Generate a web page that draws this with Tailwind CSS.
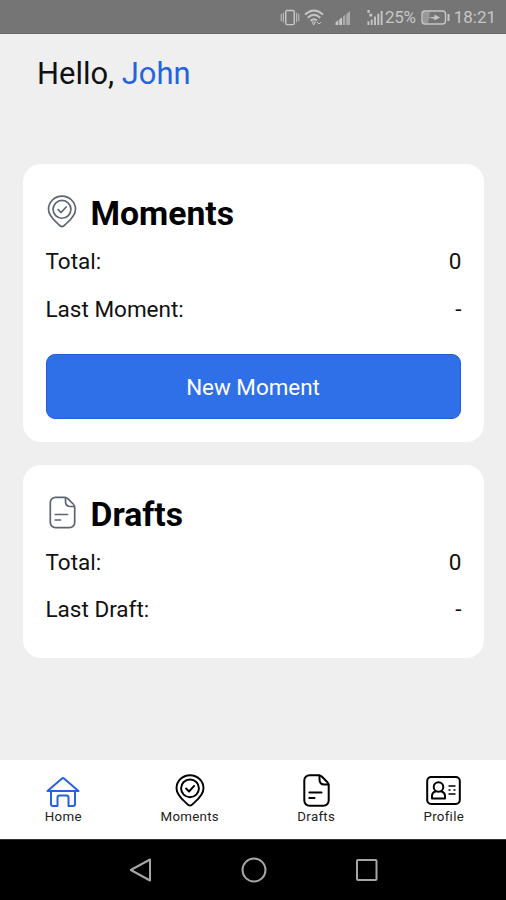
<!DOCTYPE html>
<html lang="en">
<head>
<meta charset="utf-8">
<title>Moments</title>
<script src="https://cdn.jsdelivr.net/npm/@tailwindcss/browser@4"></script>
</head>
<body class="flex h-[900px] w-[506px] flex-col overflow-hidden bg-[#efefef] font-['Roboto','Noto_Sans',sans-serif] text-[#111]">
<svg class="hidden">
  <symbol id="pin" viewBox="0 0 30 34" fill="none" stroke="currentColor" stroke-linecap="round" stroke-linejoin="round">
    <path d="M15 32.600C13.200 32.600 12 30.700 9.800 28.700C5.500 24.900 1.100 20.700 1.100 14.700A13.900 13.500 0 0 1 28.900 14.700C28.900 20.700 24.500 24.900 20.200 28.700C18 30.700 16.800 32.600 15 32.600Z"/>
    <circle cx="15" cy="14.800" r="9.200"/>
    <path d="M11 15L14 18L19.300 12.300"/>
  </symbol>
  <symbol id="doc" viewBox="0 0 27 33" fill="none" stroke="currentColor" stroke-linecap="round" stroke-linejoin="round">
    <path d="M6.500 1.300H15.500Q17.500 1.300 19 2.800L24.200 8Q25.700 9.500 25.700 11.500V26.500A5.200 5.200 0 0 1 20.500 31.700H6.500A5.200 5.200 0 0 1 1.300 26.500V6.500A5.200 5.200 0 0 1 6.500 1.300Z"/>
    <path d="M16.500 1.500V5.500Q16.500 10.500 21.500 10.500H25.500M6.300 18.500H18.500M6.300 24H11.500"/>
  </symbol>
</svg>

<header class="flex h-[34px] shrink-0 items-center justify-end border-b border-[#686868] bg-[#757575] pt-[2px] pr-[10px] text-[17px] text-[#c6c6c6]">
  <svg class="mr-1 h-[17px] w-5" viewBox="0 0 20 18" fill="none" stroke="currentColor" stroke-width="1.500"><rect x="5.500" y="1.500" width="9" height="15" rx="1.500"/><path d="M.7 5v8M3 4v10M17 4v10M19.300 5v8" stroke-width="1"/></svg>
  <svg class="mr-[11px] h-[17px] w-5" viewBox="0 0 20 17" fill="none" stroke="currentColor" stroke-width="1.900"><path d="M1 5.500Q10-2.500 19 5.500M3.800 8.700Q10 3 16.200 8.700M6.500 11.800Q10 8.800 13 11.500"/><path d="M8 13L11.500 13L9.700 16ZM13 13l2 2 2-2" stroke-width="1"/></svg>
  <svg class="mr-[15px] h-[15px] w-4" viewBox="0 0 16 16" fill="currentColor"><path d="M0 16V13L3 11V16ZM4 16V10L7 8V16Z"/><path d="M8 16V7L10.500 5V16ZM11.500 16V4.500L15.500 1V16Z" opacity=".65"/></svg>
  <svg class="mr-px h-[17px] w-[18px]" viewBox="0 0 18 18" fill="currentColor"><path d="M1 13h2v4H1zM4.500 11h2v6h-2zM8 8h2v9H8zM11.500 5h2v12h-2zM15 2h2v15h-2zM1 1h2.500v3H1zM3 5h3v3H3z"/></svg>
  <span class="tracking-[-0.300px]">25%</span>
  <svg class="mr-1 ml-[5px] h-[15px] w-[29px]" viewBox="0 0 29 15" fill="none" stroke="currentColor" stroke-width="1.400"><rect x="1" y="1" width="23.500" height="13" rx="3"/><path d="M2 2h7l-2 11H2z" fill="currentColor" stroke="none" opacity=".45"/><path d="M7 7.700l6.500-1V4.500l5.500 3-5.500 3V8.700z" fill="currentColor" stroke="none"/><path d="M27.500 4v7" stroke-width="2"/></svg>
  <span>18:21</span>
</header>

<main class="flex flex-1 flex-col px-[22.500px]">
  <h1 class="mt-[21px] ml-[14.500px] text-[30.900px] leading-[37px]">Hello, <span class="text-[#2463dc]">John</span></h1>

  <section class="mt-[72px] rounded-[18px] bg-white px-[23px] pt-[32px] pb-[22.500px]">
    <h2 class="flex h-9 items-center gap-[13px] text-[33.700px] leading-[36px] font-bold text-black"><svg class="relative -top-[3px] ml-[1px] mr-px h-[33px] w-[30px] stroke-[1.700] text-[#5c656f]"><use href="#pin"/></svg>Moments</h2>
    <dl class="mt-[6.500px] -mr-px text-[22.500px]">
      <div class="flex h-[47.500px] items-center justify-between"><dt>Total:</dt><dd>0</dd></div>
      <div class="flex h-[47.500px] items-center justify-between"><dt>Last Moment:</dt><dd>-</dd></div>
    </dl>
    <button class="mt-5 flex h-[65.500px] w-full items-center justify-center rounded-[9px] border border-[#2160d8] bg-[#2f70e9] pt-[4px] text-[22.400px] text-white">New Moment</button>
  </section>

  <section class="mt-[23px] rounded-[18px] bg-white px-[23px] pt-[32px] pb-[24px]">
    <h2 class="flex h-9 items-center gap-[15px] text-[33.700px] leading-[36px] font-bold text-black"><svg class="relative -top-[2px] ml-[3px] h-[33px] w-[27px] stroke-[1.700] text-[#5c656f]"><use href="#doc"/></svg>Drafts</h2>
    <dl class="mt-[6.500px] -mr-px text-[22.500px]">
      <div class="flex h-[47.500px] items-center justify-between"><dt>Total:</dt><dd>0</dd></div>
      <div class="flex h-[47.500px] items-center justify-between"><dt>Last Draft:</dt><dd>-</dd></div>
    </dl>
  </section>
</main>

<nav class="grid h-[79px] shrink-0 grid-cols-4 bg-white pt-[14px] text-[13.300px] leading-4 tracking-[0.300px] text-[#222]">
  <a class="flex flex-col items-center gap-[2px]"><svg class="h-[33px] w-[34px] text-[#2463dc]" viewBox="0 0 34 33" fill="none" stroke="currentColor" stroke-width="2" stroke-linejoin="round" stroke-linecap="round"><path d="M1.500 17L16 4.500Q17 3.700 18 4.500L32.500 17ZM5 17V30Q5 32 7 32H11.500V23.500Q11.500 21.500 13.500 21.500H20.500Q22.500 21.500 22.500 23.500V32H27Q29 32 29 30V17"/></svg>Home</a>
  <a class="flex flex-col items-center gap-[2px]"><svg class="h-[33px] w-[30px] stroke-2 text-black"><use href="#pin"/></svg>Moments</a>
  <a class="flex flex-col items-center gap-[2px]"><svg class="h-[33px] w-[27px] stroke-2 text-black"><use href="#doc"/></svg>Drafts</a>
  <a class="flex flex-col items-center gap-[2px] pl-[2px]"><svg class="h-[33px] w-[35px] text-black" viewBox="0 0 35 33" fill="none" stroke="currentColor" stroke-width="2" stroke-linejoin="round" stroke-linecap="round"><rect x="1.200" y="3" width="32.600" height="27" rx="4"/><circle cx="12.500" cy="13" r="4.800"/><path d="M9.500 17.500Q6 18.500 6 22V24.500H19V22Q19 18.500 15.500 17.500"/><path d="M22.500 12H29.500M22.500 16H24.500M27.500 16H29.500M22.500 20H29.500" stroke-width="1.700" stroke-linecap="butt"/></svg>Profile</a>
</nav>

<footer class="flex h-[61px] shrink-0 items-center justify-center gap-[88px] border-t border-[#333] bg-black pl-[2px] text-[#a6a6a6]">
  <svg class="h-6 w-6" viewBox="0 0 24 24" fill="none" stroke="currentColor" stroke-width="2" stroke-linejoin="round"><path d="M1.800 12L21 1.500V22.500Z"/></svg>
  <svg class="h-[26px] w-[26px]" viewBox="0 0 26 26" fill="none" stroke="currentColor" stroke-width="2"><circle cx="13" cy="13" r="11.500"/></svg>
  <svg class="h-6 w-6" viewBox="0 0 24 24" fill="none" stroke="currentColor" stroke-width="2"><rect x="2" y="2" width="19.500" height="20" rx="1"/></svg>
</footer>
</body>
</html>
